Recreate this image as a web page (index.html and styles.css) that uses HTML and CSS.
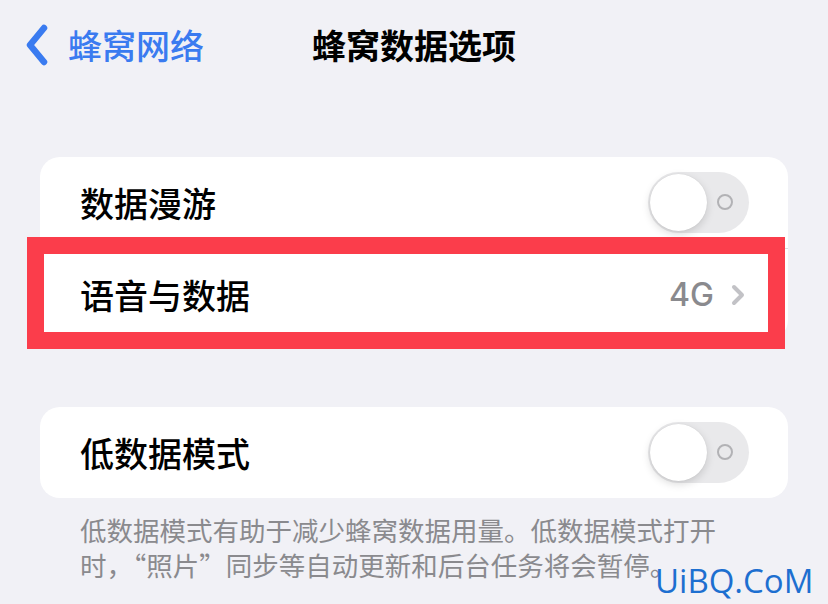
FILE: index.html
```html
<!DOCTYPE html>
<html lang="zh-CN">
<head>
<meta charset="utf-8">
<link rel="stylesheet" href="styles.css">
</head>
<body>
<div class="screen">
  <header class="nav">
    <div class="back">
      <svg class="back-icon" width="26" height="42" viewBox="0 0 26 42"><path d="M20 4 L6 21 L20 38" fill="none" stroke="#3a7bf0" stroke-width="6.5" stroke-linecap="round" stroke-linejoin="round"/></svg>
      <span class="back-text">蜂窝网络</span>
    </div>
    <div class="title">蜂窝数据选项</div>
  </header>

  <section class="card card-first">
    <div class="row">
      <span class="label">数据漫游</span>
      <span class="toggle"><span class="knob"></span><span class="ring"></span></span>
    </div>
    <div class="sep"></div>
    <div class="row row-marked">
      <span class="label">语音与数据</span>
      <span class="detail">4G
        <svg class="chev" width="16" height="24" viewBox="0 0 16 24"><path d="M4 4 L12 12 L4 20" fill="none" stroke="#c2c2c6" stroke-width="4" stroke-linecap="round" stroke-linejoin="round"/></svg>
      </span>
      <span class="mark"></span>
    </div>
  </section>

  <section class="card card-second">
    <div class="row">
      <span class="label">低数据模式</span>
      <span class="toggle"><span class="knob"></span><span class="ring"></span></span>
    </div>
  </section>
  <p class="note">低数据模式有助于减少蜂窝数据用量。低数据模式打开时，“照片”同步等自动更新和后台任务将会暂停。</p>

  <div class="watermark">UiBQ.CoM</div>
</div>
</body>
</html>
```

FILE: styles.css
```css
html, body {
  margin: 0;
  padding: 0;
}
body {
  background: #f1f1f6;
  font-family: "Noto Sans CJK SC", "Noto Sans", sans-serif;
  width: 828px;
  height: 604px;
  overflow: hidden;
}
.screen {
  position: relative;
  width: 828px;
  height: 604px;
}
.nav {
  position: relative;
  height: 90px;
}
.back {
  position: absolute;
  left: 24px;
  top: 24px;
  display: flex;
  align-items: center;
  gap: 18px;
}
.back-text {
  color: #3a7bf0;
  font-size: 34px;
  font-weight: 500;
  line-height: 42px;
}
.title {
  text-align: center;
  font-size: 34px;
  font-weight: 700;
  line-height: 42px;
  padding-top: 24px;
  color: #000;
}
.card {
  background: #fff;
  border-radius: 20px;
  margin: 0 40px;
  position: relative;
}
.card-first {
  margin-top: 67px;
}
.card-second {
  margin-top: 67px;
}
.row {
  position: relative;
  height: 91px;
  display: flex;
  align-items: center;
  justify-content: space-between;
  padding: 0 40px;
}
.label {
  font-size: 34px;
  font-weight: 500;
  color: #000;
  line-height: 40px;
}
.sep {
  height: 1px;
  margin-left: 40px;
  background: #dcdce0;
}
.toggle {
  position: relative;
  width: 101px;
  height: 61px;
  border-radius: 31px;
  background: #e9e9eb;
  margin-right: -1px;
}
.knob {
  position: absolute;
  left: 2px;
  top: 2px;
  width: 57px;
  height: 57px;
  border-radius: 50%;
  background: #fff;
  box-shadow: 0 3px 8px rgba(0,0,0,0.15), 0 0 1px rgba(0,0,0,0.12);
}
.ring {
  position: absolute;
  right: 16px;
  top: 22px;
  width: 16px;
  height: 16px;
  border-radius: 50%;
  border: 2px solid #b2b2b5;
  box-sizing: border-box;
}
.detail {
  display: flex;
  align-items: center;
  gap: 16px;
  font-family: "Inter", "Liberation Sans", sans-serif;
  font-weight: 500;
  font-size: 32px;
  color: #8a8a8e;
  margin-right: 2px;
}
.chev {
  display: block;
}
.mark {
  position: absolute;
  left: -13px;
  top: -12px;
  width: 758px;
  height: 112px;
  border: 17px solid #fb3d4b;
  box-sizing: border-box;
  pointer-events: none;
}
.note {
  margin: 14px 0 0 0;
  padding: 0 100px 0 80px;
  font-size: 26.5px;
  line-height: 35px;
  color: #8a8a8e;
}
.watermark {
  position: absolute;
  left: 655px;
  top: 558px;
  font-family: "Open Sans", "Noto Sans", sans-serif;
  font-size: 33px;
  color: #1d6fd0;
}
```
